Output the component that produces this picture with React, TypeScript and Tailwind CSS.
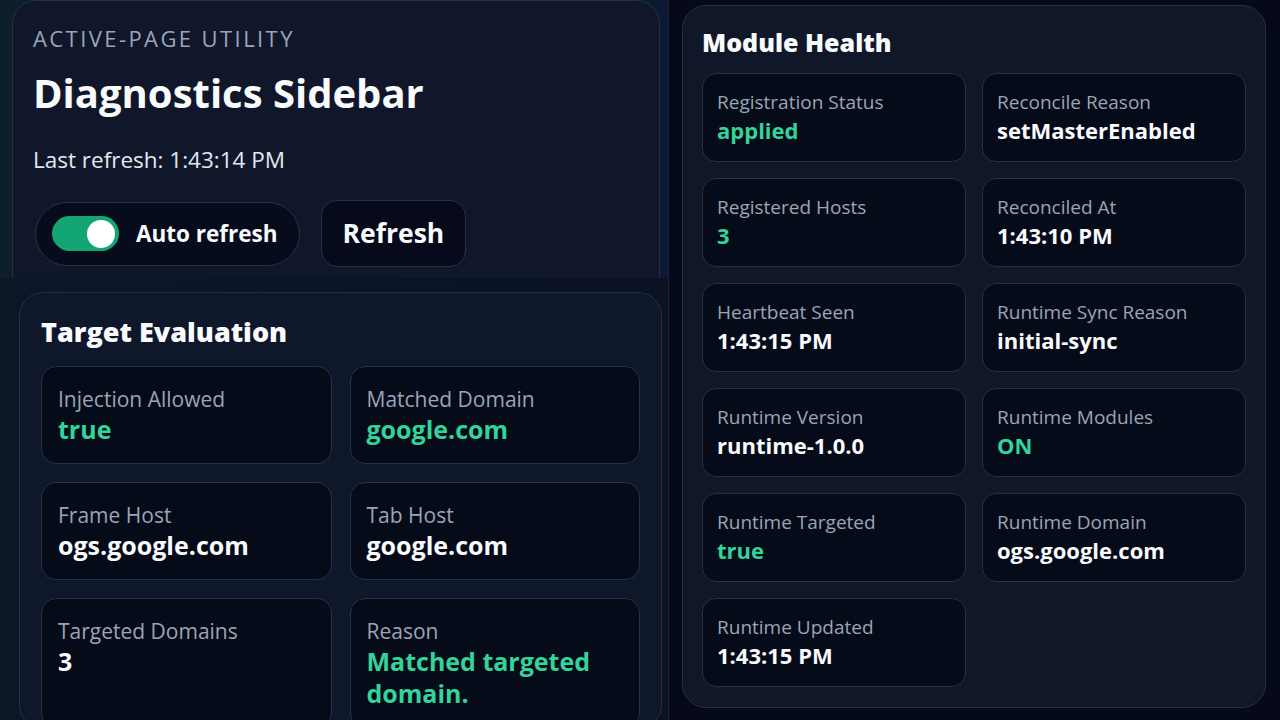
import React from 'react';

type Tone = 'green' | 'white';

interface Stat {
  label: string;
  value: string;
  tone: Tone;
}

const targetStats: Stat[] = [
  { label: 'Injection Allowed', value: 'true', tone: 'green' },
  { label: 'Matched Domain', value: 'google.com', tone: 'green' },
  { label: 'Frame Host', value: 'ogs.google.com', tone: 'white' },
  { label: 'Tab Host', value: 'google.com', tone: 'white' },
  { label: 'Targeted Domains', value: '3', tone: 'white' },
  { label: 'Reason', value: 'Matched targeted domain.', tone: 'green' },
];

const moduleStats: Stat[] = [
  { label: 'Registration Status', value: 'applied', tone: 'green' },
  { label: 'Reconcile Reason', value: 'setMasterEnabled', tone: 'white' },
  { label: 'Registered Hosts', value: '3', tone: 'green' },
  { label: 'Reconciled At', value: '1:43:10 PM', tone: 'white' },
  { label: 'Heartbeat Seen', value: '1:43:15 PM', tone: 'white' },
  { label: 'Runtime Sync Reason', value: 'initial-sync', tone: 'white' },
  { label: 'Runtime Version', value: 'runtime-1.0.0', tone: 'white' },
  { label: 'Runtime Modules', value: 'ON', tone: 'green' },
  { label: 'Runtime Targeted', value: 'true', tone: 'green' },
  { label: 'Runtime Domain', value: 'ogs.google.com', tone: 'white' },
  { label: 'Runtime Updated', value: '1:43:15 PM', tone: 'white' },
];

const toneClass = (t: Tone) => (t === 'green' ? 'text-[#34d399]' : 'text-[#f8fafc]');

const TargetCard: React.FC<{ stat: Stat }> = ({ stat }) => (
  <div className="rounded-[15px] border border-[#263246] bg-[#060b1a] px-[16px] py-[18px]">
    <div className="text-[21px] leading-[28px] text-[#9aa5b5]">{stat.label}</div>
    <div className={`text-[25px] font-bold leading-[32px] ${toneClass(stat.tone)}`}>{stat.value}</div>
  </div>
);

const ModuleCard: React.FC<{ stat: Stat }> = ({ stat }) => (
  <div className="rounded-[14px] border border-[#263246] bg-[#060b1a] px-[14px] py-[15px]">
    <div className="text-[19px] leading-[26px] text-[#9aa5b5]">{stat.label}</div>
    <div className={`text-[22px] font-bold leading-[31px] ${toneClass(stat.tone)}`}>{stat.value}</div>
  </div>
);

export default function App() {
  return (
    <div
      className="flex h-[720px] w-[1280px] overflow-hidden bg-[#060a18] text-white"
      style={{ fontFamily: '"Open Sans", "Noto Sans", sans-serif' }}
    >
      {/* Left scroll column */}
      <div className="flex w-[669px] shrink-0 flex-col border-r border-[#1c2638]">
        <div className="h-[278px] shrink-0 overflow-hidden bg-linear-to-r from-[#0c1f2a] to-[#0b1933]">
          <div className="ml-[12px] h-[320px] w-[648px] rounded-[24px] border border-[#243044] bg-[#10172a] px-[20px] pt-[23px]">
            <div className="text-[22px] uppercase leading-[28px] tracking-[0.11em] text-[#9aa5b5]">
              Active-page utility
            </div>
            <h1 className="mt-[17px] text-[40px] font-bold leading-[48px] text-[#f8fafc]">Diagnostics Sidebar</h1>
            <div className="mt-[28px] text-[22.5px] leading-[30px] text-[#e2e8f0]">Last refresh: 1:43:14 PM</div>
            <div className="mt-[25px] flex items-center gap-[21px]">
              <div className="ml-[2px] flex h-[64px] items-center gap-[17px] rounded-full border border-[#263246] bg-[#070c1c] pl-[16px] pr-[21px]">
                <div className="flex h-[35px] w-[67px] items-center justify-end rounded-full bg-[#13a574] pr-[4px]">
                  <div className="h-[28px] w-[28px] rounded-full bg-white" />
                </div>
                <span className="text-[22.5px] font-bold text-[#f8fafc]">Auto refresh</span>
              </div>
              <button className="flex h-[67px] items-center rounded-[16px] border border-[#263246] bg-[#060a1a] px-[21px] text-[26.5px] font-bold text-[#f8fafc]">
                Refresh
              </button>
            </div>
          </div>
        </div>
        <div className="flex-1 bg-linear-to-r from-[#0b1727] to-[#0a1224] pt-[14px]">
          <div className="ml-[19px] w-[643px] rounded-[24px] border border-[#243044] bg-[#0f172a] px-[21px] pt-[21px]">
            <h2 className="mb-[16px] text-[27px] font-extrabold leading-[36px] text-[#f8fafc]">Target Evaluation</h2>
            <div className="grid grid-cols-2 gap-[18px]">
              {targetStats.map((s) => (
                <TargetCard key={s.label} stat={s} />
              ))}
            </div>
          </div>
        </div>
      </div>

      {/* Right column */}
      <div className="flex-1 pl-[13px] pt-[5px]">
        <div className="h-[703px] w-[584px] rounded-[24px] border border-[#243044] bg-[#0f1729] px-[19px] pt-[20px]">
          <h2 className="mb-[15px] text-[25px] font-extrabold leading-[32px] text-[#f8fafc]">Module Health</h2>
          <div className="grid grid-cols-2 gap-x-[16px] gap-y-[16px]">
            {moduleStats.map((s) => (
              <ModuleCard key={s.label} stat={s} />
            ))}
          </div>
        </div>
      </div>
    </div>
  );
}
